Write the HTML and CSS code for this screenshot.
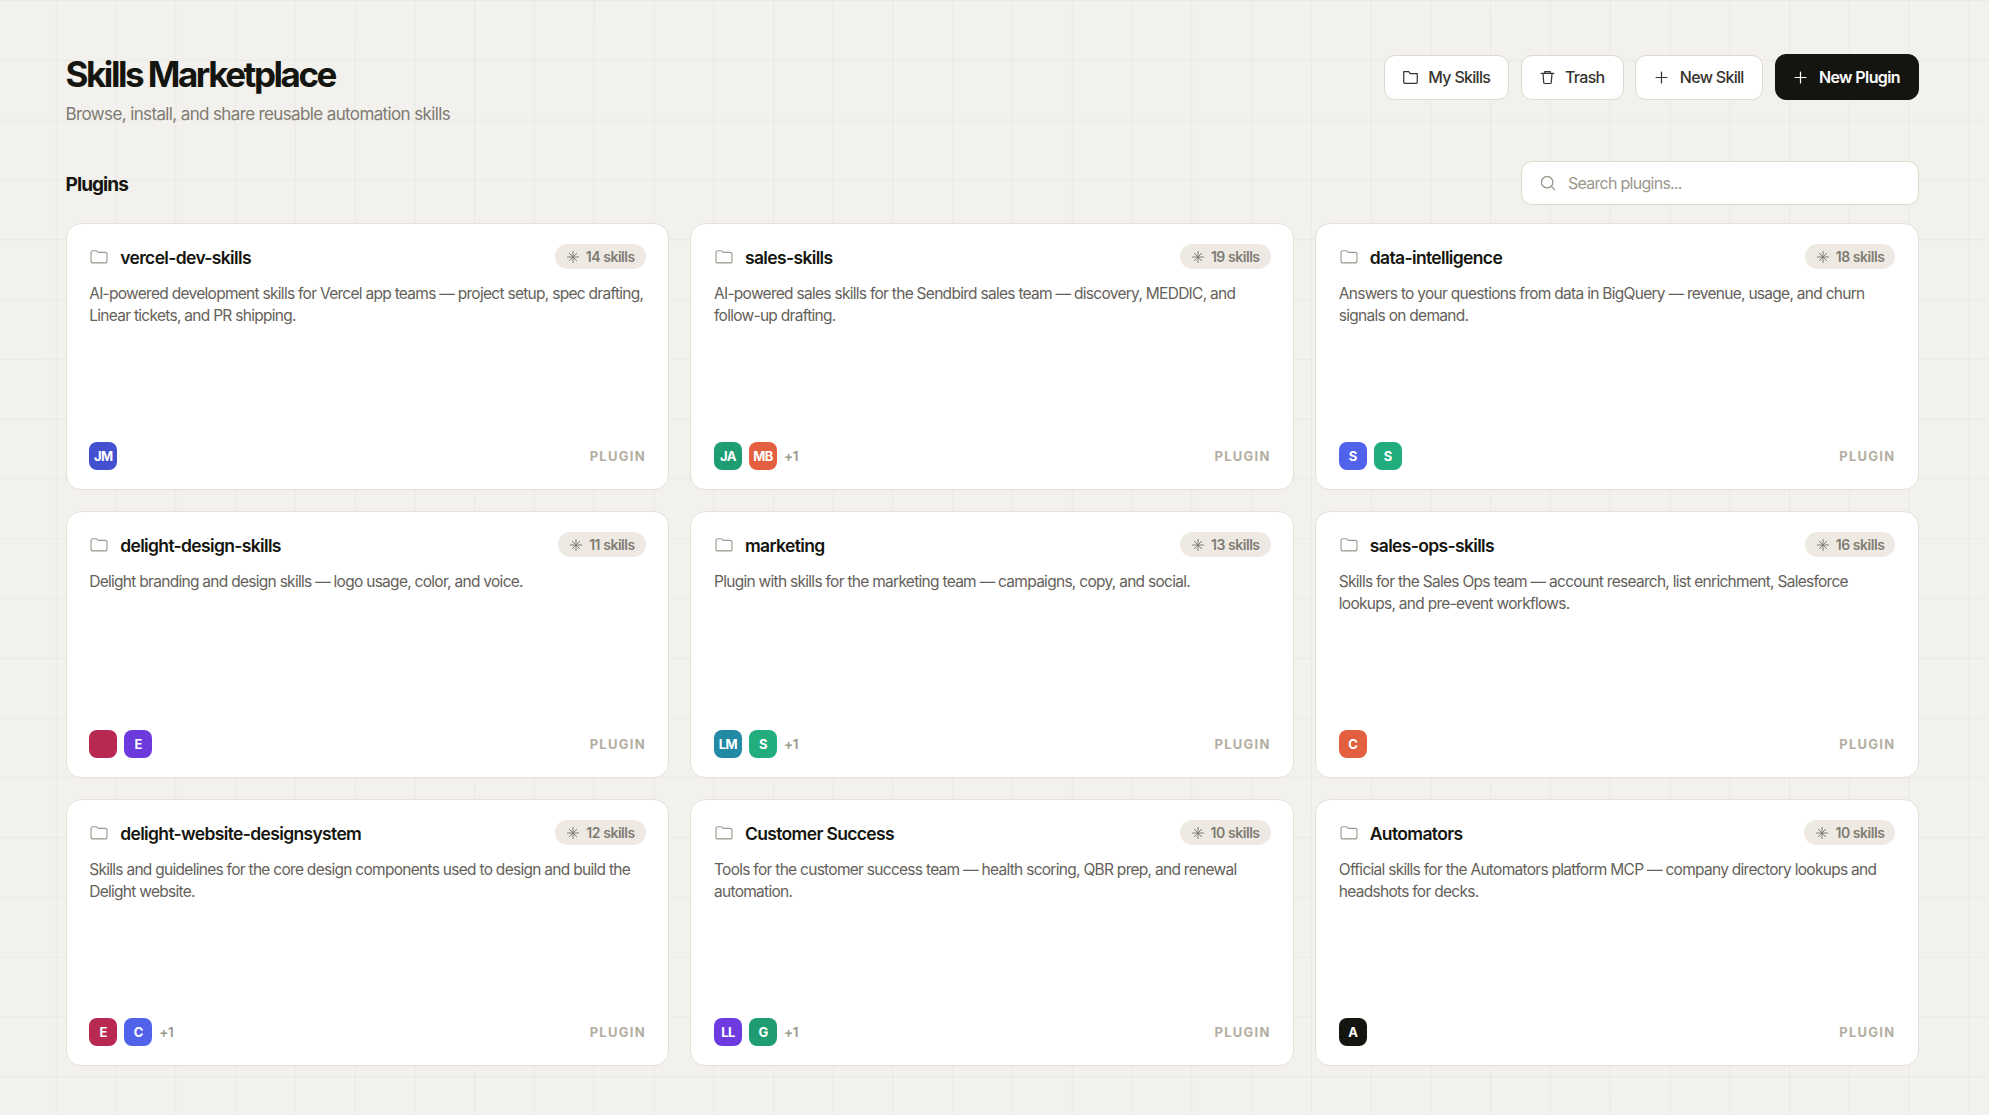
FILE: index.html
```html
<!DOCTYPE html>
<html lang="en">
<head>
  <meta charset="UTF-8">
  <meta name="viewport" content="width=device-width, initial-scale=1.0">
  <title>Skills Marketplace</title>
  <link rel="stylesheet" href="styles.css">
</head>
<body>
  <!-- Shared icons -->
  <svg class="icon-defs" width="0" height="0">
    <symbol id="icon-folder" viewBox="0 0 18 14">
      <path d="M3 .7h3c.5 0 .8.2 1.1.5l.8.9c.2.2.5.3.8.3H15c1.3 0 2 .8 2 2v6.5c0 1.3-.8 2-2 2H3c-1.3 0-2-.8-2-2V2.700c0-1.300.7-2 2-2z"/>
    </symbol>
    <symbol id="icon-folder-small" viewBox="0 0 16 16">
      <path d="M.8 1.800h5.300l1.700 2h7.400v9.600c0 .6-.3.9-.9.9H1.700c-.6 0-.9-.3-.9-.9z"/>
    </symbol>
    <symbol id="icon-trash" viewBox="0 0 16 16">
      <path d="M1.300 3.700h13.400M5 3.700V1.800h6v1.900M3.200 3.700l.8 9.800c.1.600.4.900 1 .9h6c.6 0 .9-.3 1-.9l.8-9.800"/>
    </symbol>
    <symbol id="icon-plus" viewBox="0 0 16 16">
      <path d="M8 2.200v11.600M2.200 8h11.600"/>
    </symbol>
    <symbol id="icon-search" viewBox="0 0 16 16">
      <circle cx="7.200" cy="7.200" r="5.700"/>
      <path d="M11.400 11.400l3.100 3.100"/>
    </symbol>
    <symbol id="icon-spark" viewBox="0 0 12 12">
      <path d="M6 .5v11M.5 6h11M2.400 2.400l7.200 7.200M9.600 2.400L2.400 9.600"/>
    </symbol>
  </svg>

  <div class="page">
    <header class="header">
      <div class="heading">
        <h1>Skills Marketplace</h1>
        <p>Browse, install, and share reusable automation skills</p>
      </div>
      <div class="actions">
        <button class="button my-skills"><svg class="icon"><use href="#icon-folder-small"/></svg>My Skills</button>
        <button class="button trash"><svg class="icon"><use href="#icon-trash"/></svg>Trash</button>
        <button class="button new-skill"><svg class="icon"><use href="#icon-plus"/></svg>New Skill</button>
        <button class="button button-dark"><svg class="icon"><use href="#icon-plus"/></svg>New Plugin</button>
      </div>
    </header>

    <div class="toolbar">
      <h2>Plugins</h2>
      <label class="search">
        <svg class="icon"><use href="#icon-search"/></svg>
        <input type="text" placeholder="Search plugins...">
      </label>
    </div>

    <main class="plugin-grid" id="plugin-grid"></main>
  </div>

  <script src="script.js"></script>
</body>
</html>
```
FILE: styles.css
```css
* {
  box-sizing: border-box;
}

body {
  margin: 0;
  min-height: 1115px;
  font-family: Inter, sans-serif;
  color: #15150f;
  background-color: #f2f1ed;
  background-image:
    linear-gradient(to right, rgba(21, 21, 15, 0.035) 1px, transparent 1px),
    linear-gradient(to bottom, rgba(21, 21, 15, 0.035) 1px, transparent 1px);
  background-size: 59.78px 59.8px;
  background-position: -4px 0;
}

h1, h2, h3, p {
  margin: 0;
}

.icon-defs {
  display: block;
}

svg {
  fill: none;
  stroke: currentColor;
  stroke-width: 1.3;
  stroke-linecap: round;
  stroke-linejoin: round;
}

.page {
  padding: 54px 70px 0 65.6px;
}

/* Header */
.header {
  display: flex;
  justify-content: space-between;
  align-items: flex-start;
  height: 107px;
}

.heading h1 {
  font-size: 35px;
  line-height: 41px;
  font-weight: 750;
  letter-spacing: -2.47px;
}

.heading p {
  margin-top: 6px;
  font-size: 17px;
  line-height: 26px;
  letter-spacing: -0.63px;
  color: #7f7b72;
}

.actions {
  display: flex;
  align-items: center;
  gap: 11.5px;
}

.button {
  display: flex;
  align-items: center;
  justify-content: center;
  gap: 10.5px;
  height: 45px;
  padding: 0;
  border: 1px solid #dedacf;
  border-radius: 11px;
  background-color: #fff;
  font-family: inherit;
  font-size: 16px;
  font-weight: 500;
  letter-spacing: -0.7px;
  color: #35342e;
}

.button .icon {
  width: 15px;
  height: 15px;
}

.my-skills {
  width: 125px;
}

.trash {
  width: 103px;
}

.new-skill {
  width: 128px;
}

.button-dark {
  width: 144.5px;
  height: 46px;
  border-color: #15150f;
  background-color: #15150f;
  font-weight: 600;
  letter-spacing: -0.6px;
  color: #fff;
}

/* Section title and search */
.toolbar {
  display: flex;
  justify-content: space-between;
  align-items: center;
  height: 44px;
  margin-bottom: 18px;
}

.toolbar h2 {
  padding-top: 2px;
  font-size: 19px;
  font-weight: 700;
  letter-spacing: -0.95px;
}

.search {
  display: flex;
  align-items: center;
  gap: 12px;
  width: 398px;
  height: 44px;
  padding: 0 18px;
  border: 1px solid #dedacf;
  border-radius: 11px;
  background-color: #fff;
  color: #9b978c;
}

.search .icon {
  flex: none;
  width: 16px;
  height: 16px;
}

.search input {
  width: 100%;
  padding: 0;
  border: none;
  outline: none;
  background: none;
  font-family: inherit;
  font-size: 16px;
  letter-spacing: -0.73px;
}

.search input::placeholder {
  color: #9b978c;
}

/* Plugin cards */
.plugin-grid {
  display: grid;
  grid-template-columns: repeat(3, 1fr);
  grid-auto-rows: 267px;
  gap: 21px;
}

.card {
  display: flex;
  flex-direction: column;
  padding: 20px 22.6px 19px;
  border: 1px solid #e5e1d8;
  border-radius: 15px;
  background-color: #fff;
}

.card-head {
  display: flex;
  align-items: center;
  height: 25px;
}

.card-head .icon {
  width: 18px;
  height: 14px;
  margin-left: 1px;
  margin-right: 12px;
  stroke-width: 1.1;
  color: #9b978c;
}

.card-head h3 {
  flex: 1;
  padding-top: 2px;
  font-size: 17.5px;
  font-weight: 600;
  letter-spacing: -0.65px;
}

.count {
  display: flex;
  align-items: center;
  gap: 7px;
  height: 25px;
  padding: 0 11px 0 12px;
  border-radius: 13px;
  background-color: #eeeae3;
  font-size: 14px;
  font-weight: 600;
  letter-spacing: -0.45px;
  color: #7f7b72;
}

.count svg {
  width: 12px;
  height: 12px;
  stroke-width: 1;
}

.description {
  margin-top: 14px;
  font-size: 15.5px;
  line-height: 22.4px;
  letter-spacing: -0.715px;
  color: #65615a;
}

.card-foot {
  display: flex;
  align-items: center;
  gap: 7px;
  margin-top: auto;
}

.avatar {
  display: flex;
  align-items: center;
  justify-content: center;
  width: 28px;
  height: 28px;
  border-radius: 8px;
  font-size: 13px;
  font-weight: 700;
  letter-spacing: -0.6px;
  color: #fff;
}

.more {
  font-size: 13.5px;
  font-weight: 600;
  letter-spacing: -0.3px;
  color: #9b978c;
}

.type {
  margin-left: auto;
  font-size: 13px;
  font-weight: 650;
  letter-spacing: 1.25px;
  color: #b3aea1;
}
```
FILE: script.js
```js
const plugins = [
  { name: 'vercel-dev-skills', count: 14, description: 'AI-powered development skills for Vercel app teams — project setup, spec drafting, Linear tickets, and PR shipping.', people: [['JM', '#4350d0']] },
  { name: 'sales-skills', count: 19, description: 'AI-powered sales skills for the Sendbird sales team — discovery, MEDDIC, and follow-up drafting.', people: [['JA', '#1f9d72'], ['MB', '#e25f3f']], more: 1 },
  { name: 'data-intelligence', count: 18, description: 'Answers to your questions from data in BigQuery — revenue, usage, and churn signals on demand.', people: [['S', '#5063ea'], ['S', '#22ad7c']] },
  { name: 'delight-design-skills', count: 11, description: 'Delight branding and design skills — logo usage, color, and voice.', people: [['', '#b72951'], ['E', '#6d3bdd']] },
  { name: 'marketing', count: 13, description: 'Plugin with skills for the marketing team — campaigns, copy, and social.', people: [['LM', '#228aa3'], ['S', '#22ad7c']], more: 1 },
  { name: 'sales-ops-skills', count: 16, description: 'Skills for the Sales Ops team — account research, list enrichment, Salesforce lookups, and pre-event workflows.', people: [['C', '#e25f3f']] },
  { name: 'delight-website-designsystem', count: 12, description: 'Skills and guidelines for the core design components used to design and build the Delight website.', people: [['E', '#b72951'], ['C', '#5063ea']], more: 1 },
  { name: 'Customer Success', count: 10, description: 'Tools for the customer success team — health scoring, QBR prep, and renewal automation.', people: [['LL', '#6d3bdd'], ['G', '#1f9d72']], more: 1 },
  { name: 'Automators', count: 10, description: 'Official skills for the Automators platform MCP — company directory lookups and headshots for decks.', people: [['A', '#15150f']] }
];

// Build one card per plugin
document.getElementById('plugin-grid').innerHTML = plugins.map(plugin => `
  <article class="card">
    <div class="card-head">
      <svg class="icon"><use href="#icon-folder"/></svg>
      <h3>${plugin.name}</h3>
      <span class="count"><svg><use href="#icon-spark"/></svg>${plugin.count} skills</span>
    </div>
    <p class="description">${plugin.description}</p>
    <div class="card-foot">
      ${plugin.people.map(([initials, color]) => `<span class="avatar" style="background-color: ${color}">${initials}</span>`).join('')}
      ${plugin.more ? `<span class="more">+${plugin.more}</span>` : ''}
      <span class="type">PLUGIN</span>
    </div>
  </article>
`).join('');
```
